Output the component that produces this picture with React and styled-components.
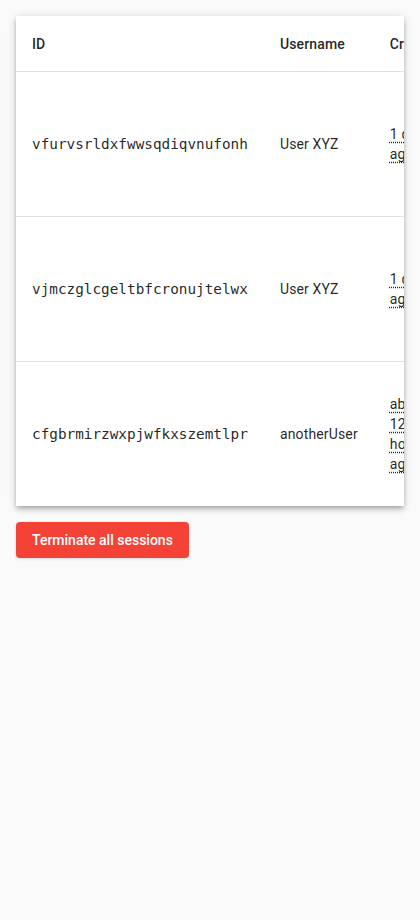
import React from 'react';
import styled, { createGlobalStyle } from 'styled-components';

const sessions = [
  { id: 'vfurvsrldxfwwsqdiqvnufonh', username: 'User XYZ', created: '1 day ago' },
  { id: 'vjmczglcgeltbfcronujtelwx', username: 'User XYZ', created: '1 day ago' },
  { id: 'cfgbrmirzwxpjwfkxszemtlpr', username: 'anotherUser', created: 'about 12 hours ago' },
];

const GlobalStyle = createGlobalStyle`
  html, body {
    margin: 0;
    padding: 0;
    background-color: #fafafa;
    font-family: Roboto, "Liberation Sans", sans-serif;
    color: rgba(0, 0, 0, 0.87);
  }
`;

const App = () => {
  return (
    <>
      <GlobalStyle />
      <Page>
        <Card>
          <Table>
            <thead>
              <tr>
                <HeadCell>ID</HeadCell>
                <HeadCell>Username</HeadCell>
                <HeadCell>Created</HeadCell>
                <HeadCell>Last used</HeadCell>
                <HeadCell />
              </tr>
            </thead>
            <tbody>
              {sessions.map((s) => (
                <Row key={s.id}>
                  <Cell>
                    <Mono>{s.id}</Mono>
                  </Cell>
                  <Cell>{s.username}</Cell>
                  <DateCell>
                    <Time title="2024-01-01 12:00">{s.created}</Time>
                  </DateCell>
                  <DateCell>
                    <Time title="2024-01-01 12:00">{s.created}</Time>
                  </DateCell>
                  <Cell />
                </Row>
              ))}
            </tbody>
          </Table>
        </Card>
        <TerminateButton>Terminate all sessions</TerminateButton>
      </Page>
    </>
  );
};

const Page = styled.div`
  padding: 16px;
  display: flex;
  flex-direction: column;
  align-items: flex-start;
  gap: 16px;
`;

const Card = styled.div`
  width: 100%;
  background-color: #fff;
  overflow: hidden;
  box-shadow: 0 2px 4px -1px rgba(0, 0, 0, 0.2), 0 4px 5px 0 rgba(0, 0, 0, 0.14),
    0 1px 10px 0 rgba(0, 0, 0, 0.12);
`;

const Table = styled.table`
  border-collapse: collapse;
  border-spacing: 0;
  font-size: 14px;
  letter-spacing: 0.01071em;
`;

const HeadCell = styled.th`
  height: 55px;
  padding: 0 16px;
  text-align: left;
  font-weight: 500;
  white-space: nowrap;
  border-bottom: 1px solid #e0e0e0;
`;

const Row = styled.tr`
  &:not(:last-child) td {
    border-bottom: 1px solid #e0e0e0;
  }
`;

const Cell = styled.td`
  height: 144px;
  padding: 0 16px;
  vertical-align: middle;
  white-space: nowrap;
  line-height: 20px;
`;

const DateCell = styled(Cell)`
  white-space: normal;
  width: 40px;
  min-width: 40px;
  max-width: 40px;
`;

const Mono = styled.span`
  font-family: "DejaVu Sans Mono", "Liberation Mono", monospace;
  font-size: 14.35px;
  letter-spacing: normal;
`;

const Time = styled.span`
  text-decoration: underline dotted;
  text-underline-offset: 3px;
`;

const TerminateButton = styled.button`
  height: 36px;
  padding: 0 16px;
  border: none;
  border-radius: 4px;
  background-color: #f44336;
  color: #fff;
  font-family: Roboto, "Liberation Sans", sans-serif;
  font-size: 14px;
  font-weight: 500;
  cursor: pointer;
  box-shadow: 0 1px 3px rgba(0, 0, 0, 0.12);
`;

export default App;
